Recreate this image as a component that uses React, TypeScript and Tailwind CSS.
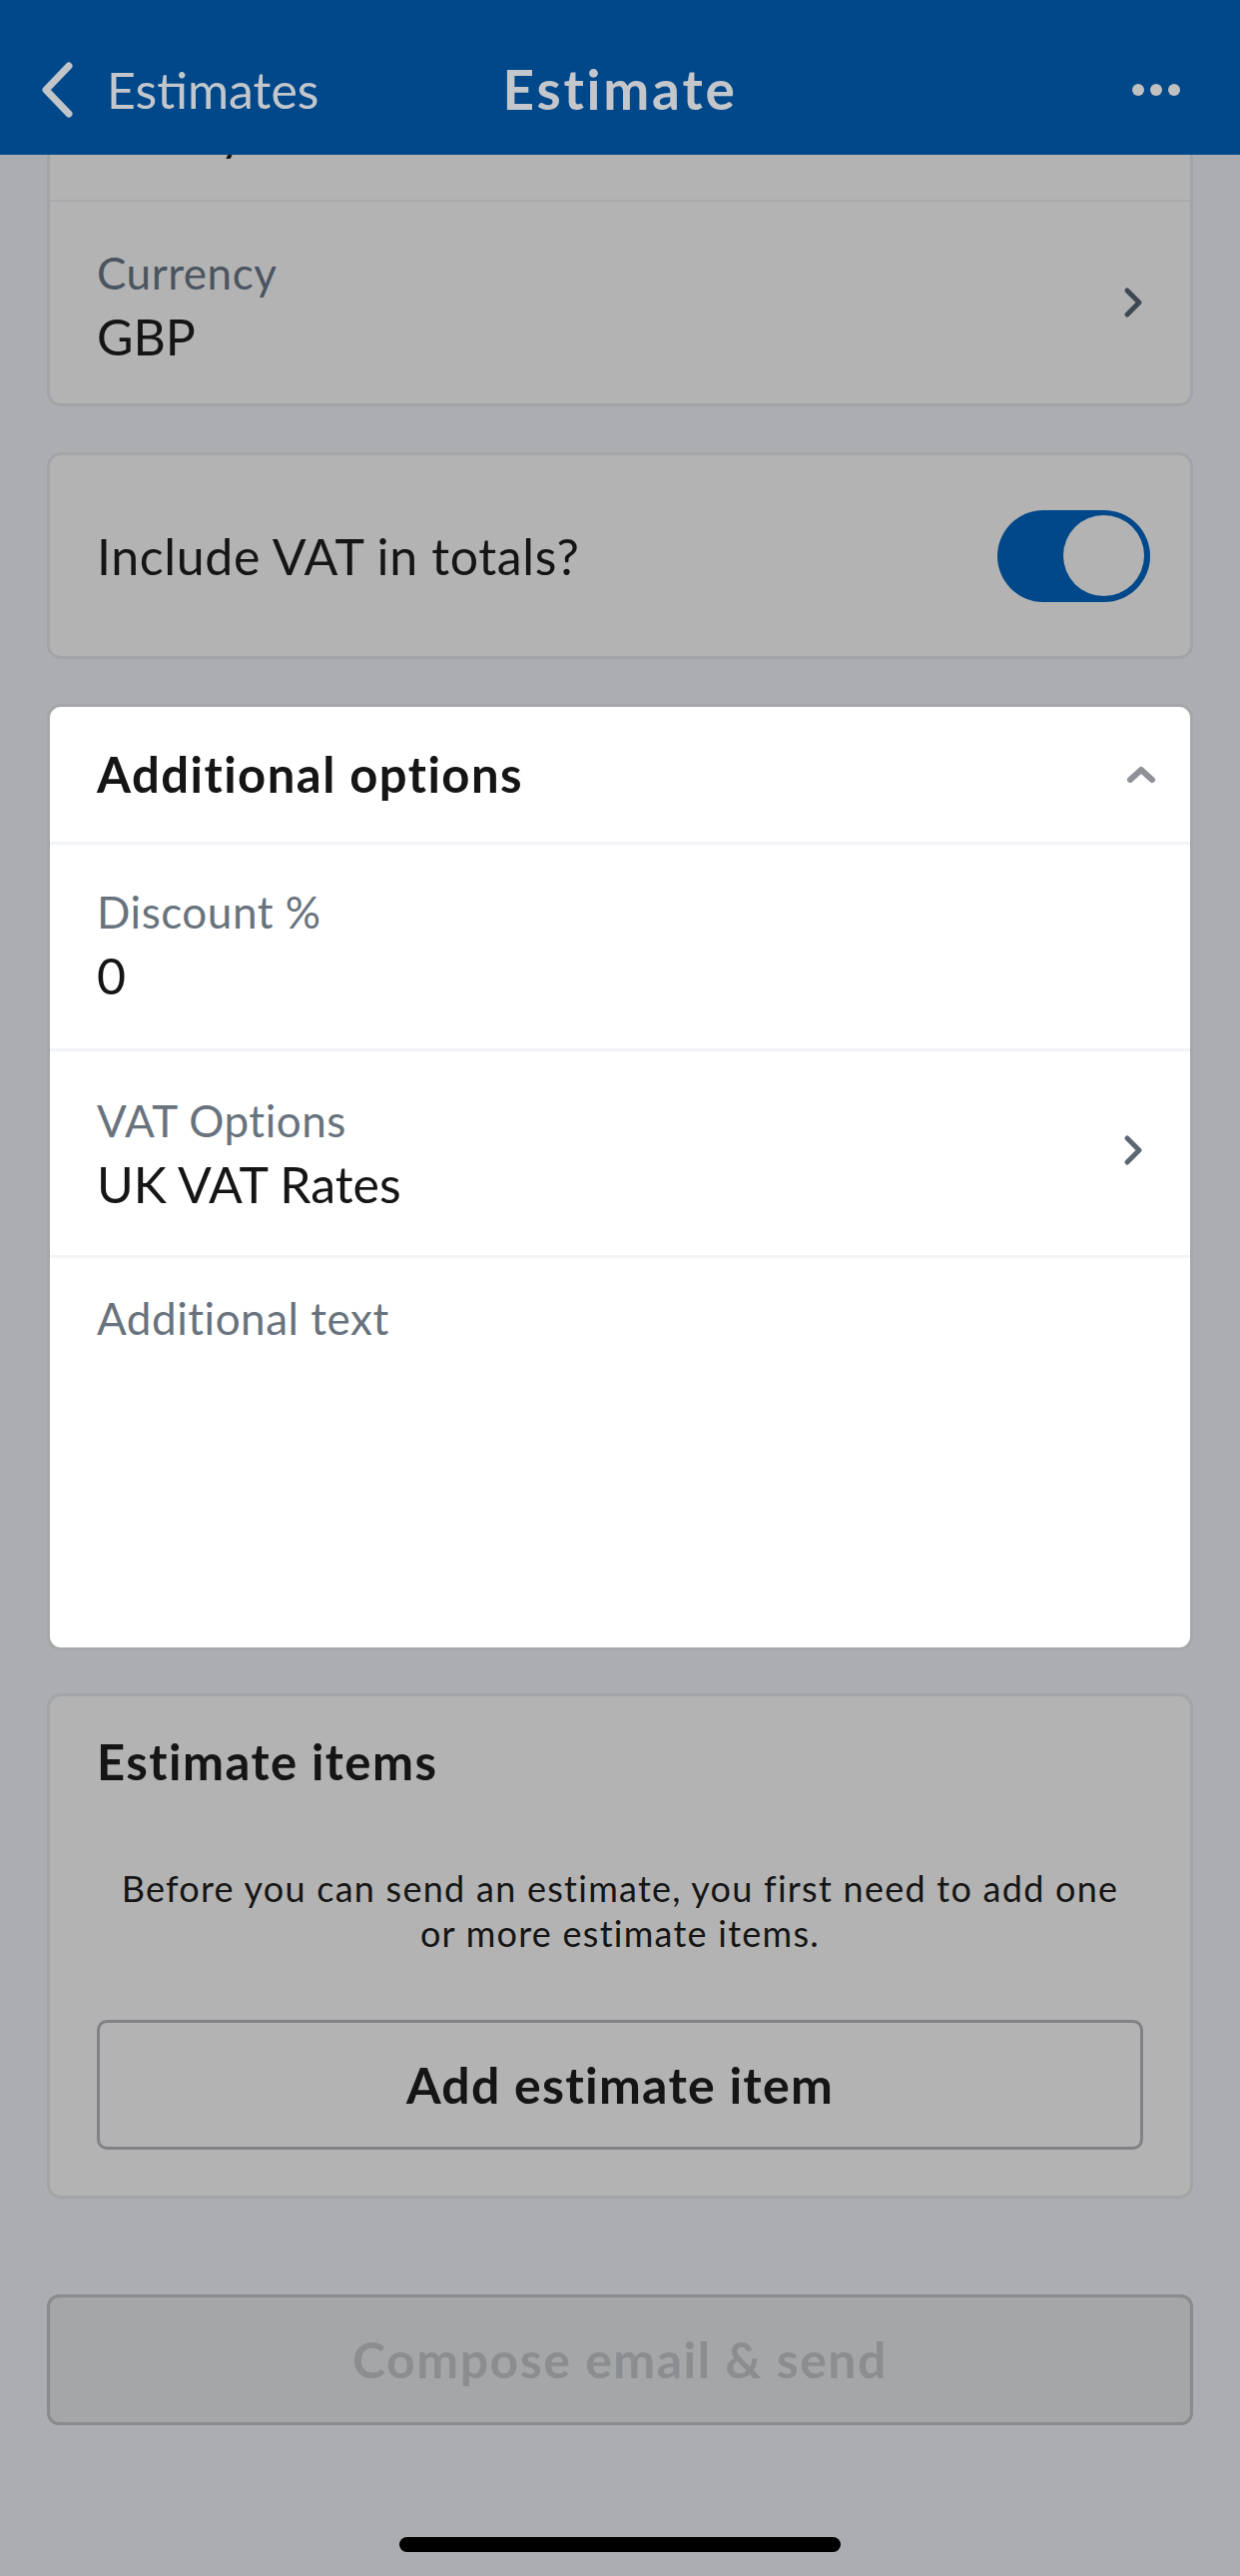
import type { ReactNode } from 'react';

const font = { fontFamily: 'Lato, "Noto Sans", sans-serif' };

function ChevronRight({ className }: { className: string }) {
  return (
    <svg className={className} viewBox="0 0 20 32" width="20" height="32" fill="none">
      <path d="M4 4 L16 16 L4 28" stroke="currentColor" strokeWidth="5" strokeLinecap="round" strokeLinejoin="round" />
    </svg>
  );
}

function ChevronUp() {
  return (
    <svg className="text-[#8e9297]" viewBox="0 0 30 18" width="30" height="18" fill="none">
      <path d="M4 14 L15 4 L26 14" stroke="currentColor" strokeWidth="6" strokeLinecap="round" strokeLinejoin="round" />
    </svg>
  );
}

function BackChevron() {
  return (
    <svg className="text-[#c1c4c8]" viewBox="0 0 34 56" width="34" height="56" fill="none">
      <path d="M29 4 L6 28 L29 52" stroke="currentColor" strokeWidth="7" strokeLinecap="round" strokeLinejoin="round" />
    </svg>
  );
}

function Header() {
  return (
    <header className="grid h-[155px] shrink-0 grid-cols-[1fr_auto_1fr] items-center bg-[#00488a] px-[40px] pt-[24px]">
      <div className="flex items-center gap-[33px]">
        <BackChevron />
        <span className="text-[50px] leading-none text-[#c3c6ca]">Estimates</span>
      </div>
      <h1 className="text-[55px] font-bold leading-none tracking-[0.05em] text-[#c3c6ca]">Estimate</h1>
      <div className="flex items-center justify-end gap-[6px] pr-[20px]">
        <span className="h-[12px] w-[12px] rounded-full bg-[#c0c0c0]" />
        <span className="h-[12px] w-[12px] rounded-full bg-[#c0c0c0]" />
        <span className="h-[12px] w-[12px] rounded-full bg-[#c0c0c0]" />
      </div>
    </header>
  );
}

type FieldProps = {
  label: string;
  value?: string;
  labelTone: string;
  chevronTone?: string;
  className: string;
};

function FieldRow({ label, value, labelTone, chevronTone, className }: FieldProps) {
  return (
    <div className={`flex items-start justify-between pl-[47px] pr-[47px] ${className}`}>
      <div>
        <p className={`text-[44px] leading-[53px] tracking-[0.012em] ${labelTone}`}>{label}</p>
        {value ? <p className="mt-[7px] text-[50px] leading-[60px] text-[#151515]">{value}</p> : null}
      </div>
      {chevronTone ? <ChevronRight className={chevronTone} /> : null}
    </div>
  );
}

function DimCard({ children, className }: { children: ReactNode; className?: string }) {
  return (
    <section className={`rounded-[14px] border-[3px] border-[#a3a4a7] bg-[#b3b3b3] ${className ?? ''}`}>
      {children}
    </section>
  );
}

export default function App() {
  return (
    <div
      className="flex h-[2580px] w-[1242px] flex-col overflow-hidden bg-[#abadb1]"
      style={font}
    >
      <Header />

      <main className="flex flex-col px-[47px]">
        {/* card scrolled under the nav bar */}
        <section className="rounded-b-[14px] border-x-[3px] border-b-[3px] border-[#a3a4a7] bg-[#b3b3b3]">
          <div className="h-[45px] overflow-hidden pl-[47px]">
            <p className="mt-[-54px] text-[50px] leading-[60px] text-[#151515]">30 days</p>
          </div>
          <div className="h-[2px] bg-[#a9a9ab]" />
          <FieldRow
            className="h-[202px] pt-[45px]"
            label="Currency"
            value="GBP"
            labelTone="text-[#4b5560]"
            chevronTone="mt-[40px] text-[#3f4953]"
          />
        </section>

        <DimCard className="mt-[46px]">
          <div className="flex h-[201px] items-center justify-between pl-[47px] pr-[40px]">
            <p className="text-[50px] leading-[60px] tracking-[0.013em] text-[#151515]">Include VAT in totals?</p>
            <div className="flex h-[92px] w-[153px] items-center justify-end rounded-full bg-[#00488a] pr-[6px]">
              <span className="h-[81px] w-[81px] rounded-full bg-[#b3b3b3]" />
            </div>
          </div>
        </DimCard>

        <section className="mt-[45px] rounded-[14px] border-[3px] border-[#a6a7aa] bg-white">
          <div className="flex h-[135px] items-center justify-between pl-[47px] pr-[34px]">
            <h2 className="text-[49px] font-bold leading-[59px] tracking-[0.03em] text-[#151515]">Additional options</h2>
            <ChevronUp />
          </div>
          <div className="h-[3px] bg-[#f2f4f7]" />
          <FieldRow
            className="h-[204px] pt-[41px]"
            label="Discount %"
            value="0"
            labelTone="text-[#68737e]"
          />
          <div className="h-[3px] bg-[#f2f4f7]" />
          <FieldRow
            className="h-[204px] pt-[43px]"
            label="VAT Options"
            value="UK VAT Rates"
            labelTone="text-[#68737e]"
            chevronTone="mt-[40px] text-[#5b6874]"
          />
          <div className="h-[3px] bg-[#f2f4f7]" />
          <FieldRow
            className="h-[390px] pt-[34px]"
            label="Additional text"
            labelTone="text-[#68737e]"
          />
        </section>

        <DimCard className="mt-[43px]">
          <div className="px-[47px] pb-[46px] pt-[36px]">
            <h2 className="text-[49px] font-bold leading-[59px] tracking-[0.03em] text-[#151515]">Estimate items</h2>
            <p className="mt-[75px] px-[20px] text-center text-[36px] leading-[45px] tracking-[0.035em] text-[#151515]">
              Before you can send an estimate, you first need to add one or more estimate items.
            </p>
            <button className="mt-[64px] flex h-[130px] w-full items-center justify-center rounded-[10px] border-[3px] border-[#808285] text-[50px] font-bold tracking-[0.025em] text-[#151515]">
              Add estimate item
            </button>
          </div>
        </DimCard>

        <button className="mt-[96px] flex h-[131px] w-full items-center justify-center rounded-[12px] border-[3px] border-[#898b8e] bg-[#a5a6a8] text-[50px] font-bold tracking-[0.03em] text-[#8b8e91]">
          Compose email &amp; send
        </button>

        <div className="mt-[112px] flex justify-center">
          <span className="h-[15px] w-[442px] rounded-full bg-black" />
        </div>
      </main>
    </div>
  );
}
